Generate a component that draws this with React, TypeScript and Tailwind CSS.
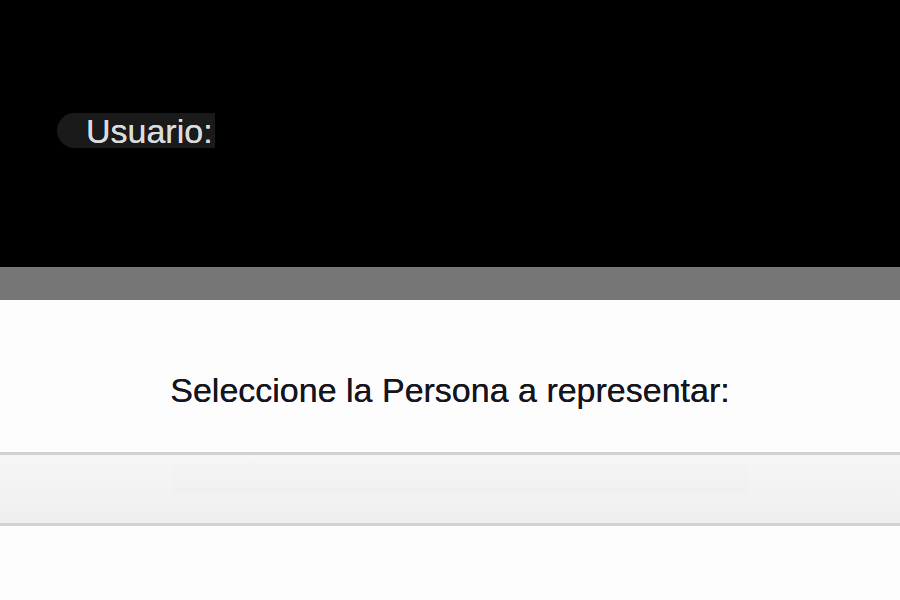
import React from 'react';

export default function App() {
  return (
    <div className="flex flex-col w-[900px] h-[600px] overflow-hidden bg-[#fdfdfd]" style={{ fontFamily: '"Liberation Sans", Arial, sans-serif' }}>
      {/* Header */}
      <header className="h-[267px] bg-black pt-[113px] pl-[57px]">
        <div className="w-[158px] h-[35px] rounded-l-full bg-[#1a1a1a] overflow-hidden flex items-center pl-[29px]">
          <span className="text-[34px] leading-none text-[#dcdcdc] whitespace-nowrap [text-shadow:0_0_0.6px_#dcdcdc]">Usuario:</span>
        </div>
      </header>
      <div className="h-[33px] bg-[#767676]"></div>

      {/* Body */}
      <main className="flex flex-col pt-[70px]">
        <h2 className="text-center text-[34px] leading-[40px] text-[#151520] [text-shadow:0_0_0.6px_#151520]">Seleccione la Persona a representar:</h2>
        <div className="mt-[42px] h-[74px] border-y-[3px] border-[#d2d2d4] bg-gradient-to-b from-[#f6f6f7] to-[#efefef] pt-[8px]">
          <div className="ml-[173px] w-[576px] h-[30px] bg-gradient-to-b from-[#f4f4f5] to-[#f0f0f0]"></div>
        </div>
      </main>
    </div>
  );
}
